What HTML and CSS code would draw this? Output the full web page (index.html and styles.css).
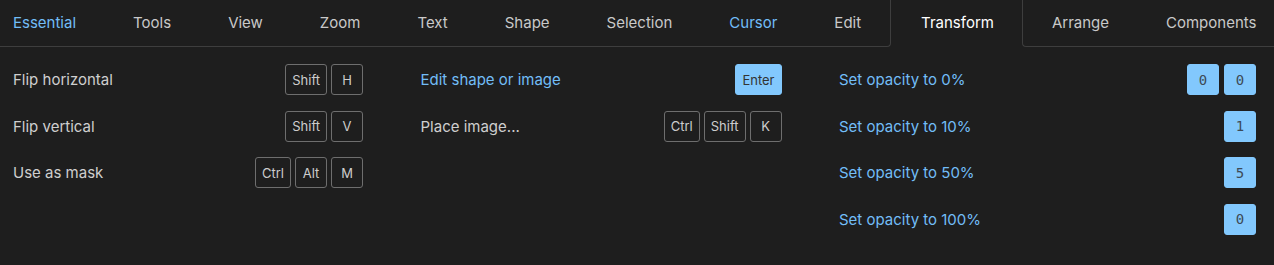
FILE: index.html
```html
<!DOCTYPE html>
<html>
<head>
<meta charset="utf-8">
<link rel="stylesheet" href="styles.css">
</head>
<body>
<div class="panel">
  <nav class="tabs">
    <div class="tab tab-first accent">Essential</div>
    <div class="tab">Tools</div>
    <div class="tab">View</div>
    <div class="tab">Zoom</div>
    <div class="tab">Text</div>
    <div class="tab">Shape</div>
    <div class="tab">Selection</div>
    <div class="tab accent">Cursor</div>
    <div class="tab before-active">Edit</div>
    <div class="tab active">Transform</div>
    <div class="tab after-active">Arrange</div>
    <div class="tab tab-last">Components</div>
  </nav>
  <main class="grid">
    <section class="col col-1">
      <div class="row"><span class="label">Flip horizontal</span><span class="keys"><kbd class="key">Shift</kbd><kbd class="key sq">H</kbd></span></div>
      <div class="row"><span class="label">Flip vertical</span><span class="keys"><kbd class="key">Shift</kbd><kbd class="key sq">V</kbd></span></div>
      <div class="row"><span class="label">Use as mask</span><span class="keys"><kbd class="key">Ctrl</kbd><kbd class="key">Alt</kbd><kbd class="key sq">M</kbd></span></div>
    </section>
    <section class="col col-2">
      <div class="row"><span class="label blue">Edit shape or image</span><span class="keys"><kbd class="key filled">Enter</kbd></span></div>
      <div class="row"><span class="label">Place image...</span><span class="keys"><kbd class="key">Ctrl</kbd><kbd class="key">Shift</kbd><kbd class="key sq">K</kbd></span></div>
    </section>
    <section class="col col-3">
      <div class="row"><span class="label blue">Set opacity to 0%</span><span class="keys"><kbd class="key filled sq mono">0</kbd><kbd class="key filled sq mono">0</kbd></span></div>
      <div class="row"><span class="label blue">Set opacity to 10%</span><span class="keys"><kbd class="key filled sq mono">1</kbd></span></div>
      <div class="row"><span class="label blue">Set opacity to 50%</span><span class="keys"><kbd class="key filled sq mono">5</kbd></span></div>
      <div class="row"><span class="label blue">Set opacity to 100%</span><span class="keys"><kbd class="key filled sq mono">0</kbd></span></div>
    </section>
  </main>
</div>
</body>
</html>
```

FILE: styles.css
```css
* { box-sizing: border-box; }
html, body {
  margin: 0;
  padding: 0;
  background: #1e1e1e;
  overflow: hidden;
}
body {
  font-family: Inter, "Noto Sans", sans-serif;
  font-size: 15px;
  color: #cfcfcf;
}
.panel {
  width: 1274px;
  height: 265px;
}
.tabs {
  display: flex;
  height: 47px;
}
.tab {
  flex: none;
  display: flex;
  align-items: center;
  height: 47px;
  padding: 0 28.5px 2px;
  border-bottom: 1px solid #3e3e3e;
  color: #c9c9c9;
  white-space: nowrap;
}
.tab-first { padding-left: 13px; }
.tab-last { flex: 1; }
.tab.accent { color: #72bdf7; }
.tab.active {
  color: #ffffff;
  border-bottom-color: transparent;
  padding-left: 30.5px;
}
.tab.before-active {
  border-right: 1px solid #3e3e3e;
  border-bottom-right-radius: 4px;
}
.tab.after-active {
  border-left: 1px solid #3e3e3e;
  border-bottom-left-radius: 4px;
}
.grid {
  display: grid;
  grid-template-columns: 350px 361px 417px;
  column-gap: 57.5px;
  padding: 17px 0 0 13px;
}
.col {
  display: flex;
  flex-direction: column;
  gap: 15.5px;
}
.row {
  display: flex;
  align-items: center;
  justify-content: space-between;
  height: 31px;
}
.label { color: #cfcfcf; }
.label.blue { color: #72bdf7; }
.keys {
  display: flex;
  gap: 4px;
}
.key {
  display: flex;
  align-items: center;
  justify-content: center;
  height: 31px;
  min-width: 32px;
  padding: 0 6px;
  border: 1px solid #6e6e6e;
  border-radius: 3px;
  font-family: Inter, "Noto Sans", sans-serif;
  font-size: 13px;
  color: #cdcdcd;
}
.key.filled {
  background: #82c8fd;
  border-color: #82c8fd;
  color: #333333;
}
.key.mono {
  font-family: "DejaVu Sans Mono", monospace;
  font-size: 14px;
  color: #3d4a57;
}
.col-3 .keys { gap: 5px; }
```
